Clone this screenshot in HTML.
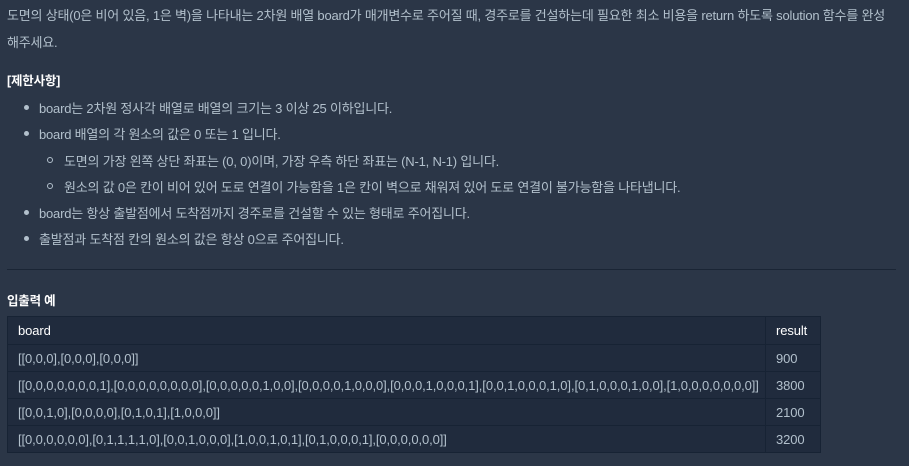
<!DOCTYPE html>
<html><head><meta charset="utf-8"><style>
body{margin:0;width:909px;height:466px;overflow:hidden;background:#2b3647;font-family:"Liberation Sans","Noto Sans CJK KR",sans-serif;font-size:13px;letter-spacing:-0.2px;color:#b2c0cc;}
.p{position:absolute;left:7px;white-space:nowrap;}
.b{position:absolute;white-space:nowrap;}
.dot{position:absolute;width:5px;height:5px;border-radius:50%;background:#b2c0cc;}
.circ{position:absolute;width:4px;height:4px;border-radius:50%;border:1px solid #b2c0cc;}
table{position:absolute;left:7px;top:316px;border-collapse:collapse;background:#202b3d;width:813px;table-layout:fixed;}
td{border:1px solid #172334;height:26px;padding:0 0 0 10px;font-size:13px;letter-spacing:-0.1px;color:#b2c0cc;white-space:nowrap;overflow:hidden;}
tr:first-child td{color:#fff;height:27px;}
</style></head><body>
<div class="p" style="top:5px">도면의 상태(0은 비어 있음, 1은 벽)을 나타내는 2차원 배열 board가 매개변수로 주어질 때, 경주로를 건설하는데 필요한 최소 비용을 return 하도록 solution 함수를 완성</div>
<div class="p" style="top:32px">해주세요.</div>
<div class="p" style="top:70px;font-weight:bold;color:#fff;font-size:12.5px">[제한사항]</div>
<div class="dot" style="left:24px;top:105px"></div><div class="b" style="left:39px;top:98px">board는 2차원 정사각 배열로 배열의 크기는 3 이상 25 이하입니다.</div>
<div class="dot" style="left:24px;top:131px"></div><div class="b" style="left:39px;top:124px">board 배열의 각 원소의 값은 0 또는 1 입니다.</div>
<div class="circ" style="left:47px;top:157px"></div><div class="b" style="left:64px;top:151px">도면의 가장 왼쪽 상단 좌표는 (0, 0)이며, 가장 우측 하단 좌표는 (N-1, N-1) 입니다.</div>
<div class="circ" style="left:47px;top:183px"></div><div class="b" style="left:64px;top:177px">원소의 값 0은 칸이 비어 있어 도로 연결이 가능함을 1은 칸이 벽으로 채워져 있어 도로 연결이 불가능함을 나타냅니다.</div>
<div class="dot" style="left:24px;top:210px"></div><div class="b" style="left:39px;top:203px">board는 항상 출발점에서 도착점까지 경주로를 건설할 수 있는 형태로 주어집니다.</div>
<div class="dot" style="left:24px;top:236px"></div><div class="b" style="left:39px;top:229px">출발점과 도착점 칸의 원소의 값은 항상 0으로 주어집니다.</div>
<div style="position:absolute;left:7px;top:269px;width:889px;height:1px;background:#1a2535"></div>
<div class="p" style="top:290px;font-weight:bold;color:#fff;font-size:12.5px">입출력 예</div>
<table>
<colgroup><col style="width:758px"><col style="width:55px"></colgroup>
<tr><td>board</td><td>result</td></tr>
<tr><td>[[0,0,0],[0,0,0],[0,0,0]]</td><td>900</td></tr>
<tr><td>[[0,0,0,0,0,0,0,1],[0,0,0,0,0,0,0,0],[0,0,0,0,0,1,0,0],[0,0,0,0,1,0,0,0],[0,0,0,1,0,0,0,1],[0,0,1,0,0,0,1,0],[0,1,0,0,0,1,0,0],[1,0,0,0,0,0,0,0]]</td><td>3800</td></tr>
<tr><td>[[0,0,1,0],[0,0,0,0],[0,1,0,1],[1,0,0,0]]</td><td>2100</td></tr>
<tr><td>[[0,0,0,0,0,0],[0,1,1,1,1,0],[0,0,1,0,0,0],[1,0,0,1,0,1],[0,1,0,0,0,1],[0,0,0,0,0,0]]</td><td>3200</td></tr>
</table>
</body></html>
